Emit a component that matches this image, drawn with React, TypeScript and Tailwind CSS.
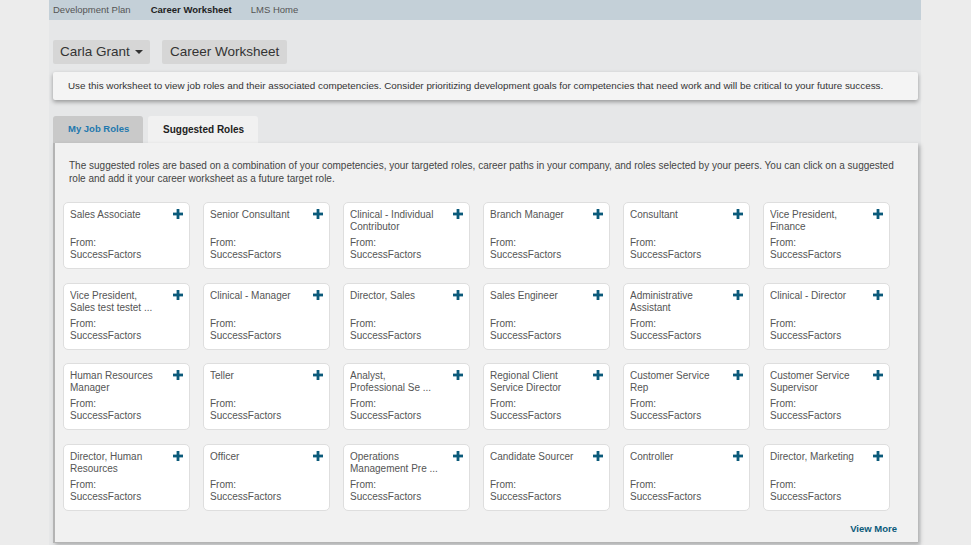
import React from "react";

type Role = { title: string };

const roles: Role[] = [
  { title: "Sales Associate" },
  { title: "Senior Consultant" },
  { title: "Clinical - Individual Contributor" },
  { title: "Branch Manager" },
  { title: "Consultant" },
  { title: "Vice President, Finance" },
  { title: "Vice President, Sales test testet ..." },
  { title: "Clinical - Manager" },
  { title: "Director, Sales" },
  { title: "Sales Engineer" },
  { title: "Administrative Assistant" },
  { title: "Clinical - Director" },
  { title: "Human Resources Manager" },
  { title: "Teller" },
  { title: "Analyst, Professional Se ..." },
  { title: "Regional Client Service Director" },
  { title: "Customer Service Rep" },
  { title: "Customer Service Supervisor" },
  { title: "Director, Human Resources" },
  { title: "Officer" },
  { title: "Operations Management Pre ..." },
  { title: "Candidate Sourcer" },
  { title: "Controller" },
  { title: "Director, Marketing" },
];

const PlusIcon = () => (
  <svg width="10" height="10" viewBox="0 0 10 10" className="block">
    <rect x="3.6" y="0" width="2.8" height="10" fill="#0b5a7a" />
    <rect x="0" y="3.6" width="10" height="2.8" fill="#0b5a7a" />
  </svg>
);

const RoleCard = ({ role }: { role: Role }) => (
  <div className="relative h-[67px] bg-white border border-[#dedede] rounded-[5px] pl-[6px] pt-[6px] text-[10px] leading-[12px] text-[#555]">
    <button className="absolute right-[6px] top-[6px]">
      <PlusIcon />
    </button>
    <div className="h-[28px] w-[88px] overflow-hidden">{role.title}</div>
    <div>From:</div>
    <div>SuccessFactors</div>
  </div>
);

const App: React.FC = () => {
  return (
    <div
      className="h-[545px] w-[971px] overflow-hidden bg-[#ececec]"
      style={{ fontFamily: '"Liberation Sans", Arial, sans-serif' }}
    >
      <div className="ml-[49px] w-[872px] h-full bg-[#e6e7e8] flex flex-col">
        {/* top nav */}
        <nav className="h-[20px] bg-[#c4d0d8] flex items-center pl-[4px] text-[9.5px] text-[#555]">
          <span>Development Plan</span>
          <span className="ml-[20px] font-bold text-[#222]">Career Worksheet</span>
          <span className="ml-[19px]">LMS Home</span>
        </nav>

        <div className="pl-[4px] pr-[3px] flex flex-col">
          <div className="mt-[20px] flex gap-[12px]">
            <button className="h-[24px] w-[97px] bg-[#d6d6d6] rounded-[2px] flex items-center pl-[7px] text-[13.5px] text-[#333]">
              Carla Grant
              <span className="ml-[5px] w-0 h-0 border-l-[4px] border-r-[4px] border-t-[4px] border-l-transparent border-r-transparent border-t-[#333]" />
            </button>
            <div className="h-[24px] w-[125px] bg-[#d6d6d6] rounded-[2px] flex items-center pl-[8px] text-[13.5px] text-[#333]">
              Career Worksheet
            </div>
          </div>

          <div className="mt-[8px] h-[28px] bg-[#f4f4f4] rounded-[2px] shadow-[0_2px_4px_rgba(0,0,0,0.35)] flex items-center pl-[15px] text-[9.85px] text-[#333]">
            Use this worksheet to view job roles and their associated competencies. Consider prioritizing development goals for competencies that need work and will be critical to your future success.
          </div>

          {/* tabs */}
          <div className="mt-[16px] flex items-end gap-[5px] h-[27px]">
            <button className="h-[27px] w-[90px] bg-[#c9c9c9] rounded-t-[3px] text-[9.5px] font-bold text-[#1f78ae] pl-[15px] text-left">
              My Job Roles
            </button>
            <button className="h-[27px] w-[110px] bg-[#f1f1f1] rounded-t-[3px] text-[10px] font-bold text-[#222] pl-[15px] text-left">
              Suggested Roles
            </button>
          </div>

          <div className="h-[400px] bg-[#f1f1f1] border-l-[2px] border-b border-[#b4b4b4] shadow-[2px_2px_4px_rgba(0,0,0,0.25)] pl-[8px] pr-[10px] pt-[16px]">
            <p className="pl-[6px] w-[840px] text-[10px] leading-[13px] text-[#444]">
              The suggested roles are based on a combination of your competencies, your targeted roles, career paths in your company, and roles selected by your peers. You can click on a suggested role and add it your career worksheet as a future target role.
            </p>
            <div className="mt-[17px] grid grid-cols-[repeat(6,127px)] gap-x-[13px] gap-y-[13.5px]">
              {roles.map((r) => (
                <RoleCard key={r.title} role={r} />
              ))}
            </div>
            <div className="mt-[11px] flex justify-end pr-[11px]">
              <a className="text-[9.5px] font-bold text-[#0b5a7a]">View More</a>
            </div>
          </div>
        </div>
      </div>
    </div>
  );
};

export default App;
